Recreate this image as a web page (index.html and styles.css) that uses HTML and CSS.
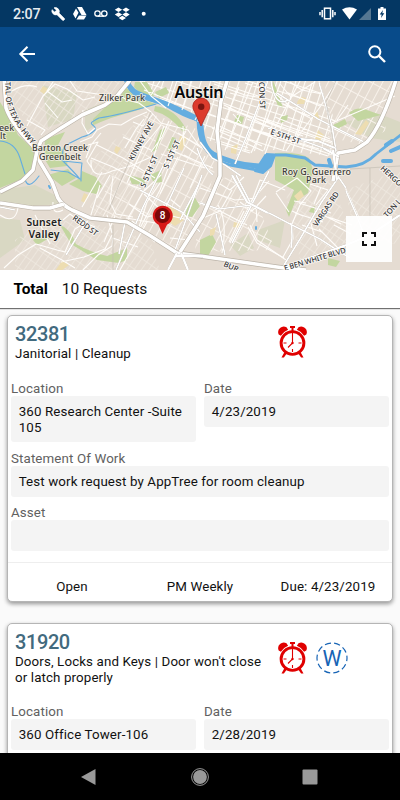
FILE: index.html
```html
<!DOCTYPE html>
<html lang="en">
<head>
<meta charset="utf-8">
<title>Requests</title>
<link rel="stylesheet" href="styles.css">
</head>
<body>
<svg class="defs" width="0" height="0">
  <symbol id="alarm" viewBox="0 0 28 32">
    <g fill="#e00000">
      <path d="M.2 8.500A5.600 5.600 0 0 1 8 1.300L9.600 3.800A15 15 0 0 0 2.400 9.700Z"/>
      <path d="M27.800 8.500A5.600 5.600 0 0 0 20 1.300L18.400 3.800A15 15 0 0 1 25.600 9.700Z"/>
      <path d="M11.500 0h5v2h-1.500v3h-2v-3h-1.500z"/>
      <path d="M6 26l2.300 1.500L5.400 31.500H3zM22 26l-2.300 1.500L22.600 31.500H25z"/>
    </g>
    <circle cx="14" cy="17" r="11.400" fill="#fff" stroke="#e00000" stroke-width="2.900"/>
    <path d="M14 6v11l-4.500 4.500M5 17h3M20 17h3M14 23v3" fill="none" stroke="#e00000" stroke-width="1.100"/>
    <circle cx="14" cy="17" r="1.200" fill="#e00000"/>
  </symbol>
</svg>

<header class="status">
  <span class="clock">2:07</span>
  <svg class="notif" viewBox="50 0 100 27" width="100" height="27" fill="#fff">
    <path d="M64.400 18.500L59 13.100A4 4 0 0 0 54 7.800l2.500 2.400-1.900 1.900L52 9.700A4 4 0 0 0 57 14.700l5.500 5.500q.7.500 1.200 0l.8-.7q.4-.6-.1-1z" stroke="#fff" stroke-width=".7"/>
    <path d="M77 7h5l4.500 8h-5zM76 8.500l2.500 4.300-3 5.700-2.500-4.500zM79 15.500h7.500l-2.500 4h-7.500z"/>
    <g fill="none" stroke="#fff" stroke-width="1.300"><circle cx="97.500" cy="13.500" r="2.700"/><circle cx="104.300" cy="13.500" r="2.700"/><path d="M97.500 16.200h6.800"/></g>
    <path d="M118.500 7.500l3.700 2.300-3.700 2.300-3.700-2.300zM126 7.500l3.700 2.300-3.700 2.300-3.700-2.300zM118.500 12.300l3.700 2.300-3.700 2.300-3.700-2.300zM126 12.300l3.700 2.300-3.700 2.300-3.700-2.300zM122.300 15.700l3.700 2.300-3.700 2.300-3.700-2.300z"/>
    <circle cx="143.700" cy="13.700" r="2"/>
  </svg>
  <svg class="system" viewBox="315 0 75 27" width="75" height="27">
    <g fill="none" stroke="#fff" stroke-width="1.500"><rect x="324.500" y="8.200" width="6" height="10.600"/><path d="M322.200 10v7.200M332.800 10v7.200M320 12v3.200M335 12v3.200"/></g>
    <path d="M342 9.500q7.500-4.500 15 0L349.500 19.500z" fill="#fff"/>
    <path d="M371 8v12h-12z" fill="#557792"/>
    <path d="M378 8.500h2.500V7h3v1.500h2.500V20h-8z" fill="#fff"/>
    <path d="M383 10l-3.300 4.500h2L381 18l3.300-4.700h-2z" fill="#043763"/>
  </svg>
</header>

<nav class="appbar">
  <svg width="18" height="18" viewBox="0 0 18 18" fill="none" stroke="#fff" stroke-width="2"><path d="M17 9H2.500M9.500 1.800L2.300 9l7.200 7.200"/></svg>
  <svg width="18" height="18" viewBox="0 0 18 18" fill="none" stroke="#fff" stroke-width="2"><circle cx="6.800" cy="6.800" r="5.600"/><path d="M11 11l6 6" stroke-width="2.400"/></svg>
</nav>

<section class="map">
<svg viewBox="0 81 400 189" width="400" height="189">
  <defs>
    <pattern id="gridA" width="9" height="11" patternUnits="userSpaceOnUse" patternTransform="rotate(18)"><path d="M0 .5H9M.5 0V11" stroke="#fffdf8" stroke-width="1.200" fill="none"/></pattern>
    <pattern id="gridB" width="8" height="17" patternUnits="userSpaceOnUse" patternTransform="rotate(28)"><path d="M0 .5H8M.5 0V17" stroke="#f8f2eb" stroke-width="1" fill="none"/></pattern>
    <pattern id="gridC" width="6" height="13" patternUnits="userSpaceOnUse" patternTransform="rotate(35)"><path d="M0 .5H6M.5 0V13" stroke="#efe8df" stroke-width=".8" fill="none"/></pattern>
  </defs>
  <rect y="81" width="400" height="189" fill="#e5dcd2"/>

  <g fill="#d9d8c3">
    <path d="M0 190L35 185 55 195 62 204 30 206 0 202zM0 218L20 220 25 240 0 258z"/>
    <path d="M258 230L285 220 280 248 258 240zM230 245l18-12 6 15-14 8zM345 122l35-8 20 8v20l-30-4z"/>
    <path d="M85 110l25-10 5 12-30 20zM42 85l35 8-4 26-25 8z"/>
  </g>
  <g fill="url(#gridC)">
    <path d="M14 81H122L105 100 60 125 35 135 12 100zM45 220L90 222 150 240 160 270H15V240zM90 160L140 120 150 130 125 220 90 212z"/>
    <path d="M285 190L330 180 355 240 300 260zM345 190l55-20v75l-45-10z"/>
  </g>
  <g fill="url(#gridB)">
    <path d="M145 112L195 128 218 160 200 220 178 250 130 220 90 215 125 160zM200 190L230 175 262 215 275 250 195 252z"/>
    <path d="M325 81h68l-8 50-22 14-35-8z"/>
  </g>
  <path fill="url(#gridA)" d="M138 81H318L335 120 332 156 275 150 235 152 208 140 200 116 162 100z"/>

  <g fill="#c3d6a0">
    <path d="M0 102Q11 118 18 135L36 152 31 170 22 179 0 188z"/>
    <path d="M124 85L135 97 156 104 135 111 111 118 93 125 93 119 112 101z"/>
    <path d="M45 139L65 132 58 145 68 157 67 166 50 168 44 158zM135 82h12l8 13-9 4-12-12z"/>
    <path d="M155 106q20 2 31 23l-3 3q-13-17-29-21z"/>
    <path d="M80 178l2-7 14 6 6 9-6 8-13-3-14-7zM48 175l20-6 8 9-14 8zM128 175l16 4 2 6-14-1z"/>
    <path d="M160 130l5-2-8 22-5 2zM172 137l4 1-4 12-5 1z"/>
    <path d="M275 153Q300 152 309 158L313 170 308 193 295 202 289 217 286 210 294 190 275 180z"/>
    <path d="M333 125l12-6 2 5-10 5zM349 113q8-7 18-3l14 5-23 6zM200 240l12-6 4 8-8 14h-8z"/>
    <path d="M60 225Q70 228 76 244Q90 252 107 256l20-8v12l-8 3-22-3-26-16zM33 240q17-10 22-5l-18 10zM273 81q5 11 10 27l-5-2-6-16z"/>
    <path d="M237 115l7 2-2 7-8-2zM280 117l8-2-1 5-6 3zM188 205l6-9 6 10-8 11-7-1zM150 175l11-5 1 12-8 1z"/>
    <path d="M155 92l11-5 3 6-10 5zM311 208l4-2-1 7-5-1zM328 258l12 3-4 6-8-2z"/>
  </g>
  <g fill="#edddb1">
    <path d="M43 86l5 3-4 5-4-3zM302 97q-5 3-5 7h7l2-6zM317 111l-4 7 7 2zM366 120l3 3-8 12-6-1zM318 130l6 5-5 7-4-3zM180 136l7 1-5 14-5-3z"/>
    <path d="M84 193l4 2-3 8-4-2zM116 146l5 2-4 6-3-3zM167 203q13 6 17 17l-9 6-11-7zM301 190l3 6-6 5-4-5zM62 261l7 4-8 6h-6zM234 222l8 2-3 4-6-1zM210 230l6-3-2 8-4 1zM231 147l7-3-2 10-5-1z"/>
  </g>

  <g fill="none" stroke="#64ade0" stroke-linecap="round" stroke-linejoin="round">
    <path d="M125 78Q128 91 139 97L164 104Q185 117 198 120Q198 136 204 147Q213 161 230 165L257 170Q264 170 268 155L286 155 305 158 315 165 346 167Q365 166 376 154L402 134" stroke-width="2.800"/>
    <path d="M127 81Q130 92 144 96L166 104Q187 113 201 121" stroke-width="5.200"/>
    <path d="M201 126Q202 147 213 154Q234 165 259 166" stroke-width="5.200"/>
    <path d="M255 171L266 154 275 155 271 166 263 173z" fill="#64ade0" stroke-width="2"/>
    <path d="M386 145l6-4M391 151l9-4M383 161l8 0M329 160l2 6" stroke-width="4"/>
    <path d="M156 104Q120 115 99 118C83 126 97 123 95 130Q90 135 82 137L66 145Q61 150 63 161M63 161L82 163Q81 169 81 181M61 159Q75 173 80 179L68 172 51 170 M0 141Q15 142 20 158L25 174M25 179q3 12 14-3" stroke-width="1.100"/>
    <path d="M49 186l1 2M256 227v2" stroke-width="2"/>
  </g>

  <g class="minor">
    <path d="M12 91Q25 83 37 87M27 126L43 96 55 84 67 89 83 100 95 97M27 120L45 130 41 135M83 110L82 123 88 134 95 128M53 82L47 91 62 102 72 100M58 118L45 103M70 81L77 91 104 95"/>
    <path d="M117 94L127 100 139 103 151 112 161 123 188 130 200 147M80 142L92 137 97 130 109 124 121 125 133 118 147 112M86 158L91 145 101 133M133 122L143 126 153 114M125 148L136 129 144 119M161 125L143 147 127 183M151 152L162 137 169 121M183 126L184 145 198 155M91 160Q90 181 112 171L131 166 151 157M97 145L123 158 155 178M88 145L98 142 87 161 93 170M91 158L113 167 143 183M123 137L136 143 151 150M186 131L175 150 160 190 139 230M164 126L153 158 145 182M161 154L205 168M168 149L213 168M178 133L202 148M178 157L160 194M205 156L190 188M184 155L206 166"/>
    <path d="M53 202Q52 216 63 210M82 207L102 172M97 198L110 175M90 218L100 185M113 176L110 202 116 214 133 217M115 216L104 242M107 215L112 233M129 204L147 217 160 214M128 218L143 192 161 175M141 189L128 184M138 230L147 202 160 183M0 215Q15 225 18 208M63 220L70 214 78 220 95 227M40 248L62 260 75 268M36 244L18 255 4 268M36 244L57 250 65 252 75 229 88 221M61 262L84 257 105 249 112 235M120 270L147 222M83 270L98 255 112 246 113 238 138 247M50 244L35 215M144 194L161 210 170 199 180 207M126 218L162 224 168 215 188 220M132 221L155 242M170 238L190 240M200 188L235 200 256 198M215 181L230 190 244 177M200 202L220 211 247 225M203 218L220 211 232 190M251 203L230 243M265 180L250 208M240 202L252 211 266 196M250 206L260 180 285 190M250 225L257 240 286 260M256 205L257 222"/>
    <path d="M140 81L151 96 166 108M160 81L151 95M144 90L191 109M177 81L168 106M191 81L182 110M200 94L198 122M205 101L195 120M210 98L260 117 333 142M204 112L287 143 328 156M212 128L263 151M215 142L250 153M230 93L286 108M224 105L261 123 306 143M239 87L220 132M253 82L235 127 225 150M267 81L247 140 237 156M281 81L267 120 251 153M300 81L275 128 265 154M312 83L295 137 286 151M315 82L291 97 280 84M245 83L276 94 294 110 310 116M228 108L303 136M226 119L271 136M219 126L262 146M215 134L248 148M220 137L217 144M286 92L320 106M283 104L312 119M275 117L330 139M263 132L319 149M266 120L281 127M247 119L288 134M233 114L241 123M319 81L326 106 333 142M337 81L320 107 296 139M327 125L395 96M328 126L364 143M337 120L348 105M290 82L302 90 322 94M214 84L245 95 263 98M203 90L216 97"/>
    <path d="M218 205Q228 222 222 253M229 242L244 211M245 208L269 181M248 227L257 243 284 258M276 193L289 212M276 192L297 178 311 191 300 205 292 224 293 239 283 257M310 184L328 190 316 205M314 204L321 187M294 201L306 203M292 211L303 216M299 203L331 213M295 213L323 222M323 215L341 224M328 217L352 225M334 225L351 234M310 220L317 246M319 229L338 248M302 225L322 232M344 185L360 220"/>
  </g>
  <g class="street">
    <path d="M268 81L245 140 235 164M271 81Q275 108 288 100M319 83L332 126 336 151 335 176M277 93L318 119 364 142M268 128L337 153"/>
    <path d="M0 207L15 210M200 203L219 209 252 205 273 215 292 225 320 239 340 252 350 258M338 178L321 203 300 239 284 265M346 191L356 214 363 232M337 175L346 188M291 248Q293 237 291 223M236 175L251 204M199 184L180 220M216 214Q221 235 225 255M269 171L232 243M200 142L212 158 225 165 241 176"/>
    <path d="M140 190L182 212 200 232M166 160L143 207 116 270M184 168L159 222M202 175L174 253M86 222L66 255M125 222L119 254M197 148Q203 167 213 175"/>
  </g>
  <path class="rail" d="M336 81L326 102 335 153M151 112L121 180 109 210M370 168v55M350 169L400 166M113 225v45"/>

  <g class="casing">
    <path d="M4 78L6 108Q12 125 33 146L40 162 52 182 58 198Q62 205 72 210L90 218 127 222 149 235 177 253 200 256 284 268 306 270"/>
  </g>
  <g class="road">
    <path d="M4 78L6 108Q12 125 33 146L40 162 52 182 58 198Q62 205 72 210L90 218 127 222 149 235 177 253 200 256 284 268 306 270"/>
  </g>
  <g class="casing wide">
    <path d="M0 192L22 181 33 170 37 151 41 141 61 128 82 115 105 105 117 96 131 79M0 203L33 208 50 208 64 204M228 78L221 101 217 131 220 160 220 176 203 216 180 252M396 80Q382 125 367 142L355 150 338 153 333 181"/>
  </g>
  <g class="road wide">
    <path d="M0 192L22 181 33 170 37 151 41 141 61 128 82 115 105 105 117 96 131 79M0 203L33 208 50 208 64 204M228 78L221 101 217 131 220 160 220 176 203 216 180 252M396 80Q382 125 367 142L355 150 338 153 333 181"/>
  </g>
  <g class="street bold">
    <path d="M177 253L168 270M181 253L188 270M232 175L247 202 268 213M284 267L344 246 370 235 400 215M335 148L318 141 300 139M175 256H203M323 148L339 157M333 150L337 180"/>
  </g>

  <g class="label">
    <text x="99" y="101" textLength="46">Zilker Park</text>
    <text x="32" y="151" textLength="56">Barton Creek</text><text x="39" y="159.500" textLength="42">Greenbelt</text>
    <text x="-1" y="130.500">eek</text><text x="0" y="139">lt</text>
    <text x="282" y="174.500" textLength="69">Roy G. Guerrero</text><text x="306" y="183" textLength="20">Park</text>
  </g>
  <g class="label town">
    <text x="26.500" y="226" textLength="35">Sunset</text><text x="28.500" y="237.500" textLength="31">Valley</text>
  </g>
  <text class="label city" x="174.500" y="98" textLength="49">Austin</text>
  <g class="label roadname">
    <path id="capital" d="M5 81L6 100Q10 121 34 147" fill="none" stroke="none"/>
    <text><textPath href="#capital" startOffset="1" textLength="70">TAL OF TEXAS HWY</textPath></text>
    <text transform="translate(133 161) rotate(-61)" textLength="43">KINNEY AVE</text>
    <text transform="translate(145 188) rotate(-68)" textLength="34">S 5TH ST</text>
    <text transform="translate(168 169) rotate(-66)" textLength="30">S 1ST ST</text>
    <text transform="translate(259 82) rotate(88)">CON ST</text>
    <text transform="translate(270 134) rotate(19)" textLength="31">E 5TH ST</text>
    <text transform="translate(72 219) rotate(36)" textLength="29">REDD ST</text>
    <text transform="translate(317 227) rotate(-56)" textLength="40">VARGAS RD</text>
    <text transform="translate(285 271) rotate(-17)" textLength="64">E BEN WHITE BLVD</text>
    <text transform="translate(223 266) rotate(24)">BUR</text>
    <text transform="translate(380 169) rotate(43)">HERGO</text>
    <text transform="translate(387 218) rotate(-48)">TON L</text>
  </g>

  <path d="M201 126l-6.500-14.300a8.500 8.500 0 1 1 13.500 0z" fill="#dc3b2c" stroke="#a92720" stroke-width=".8"/>
  <circle cx="201.200" cy="106.800" r="3.200" fill="#7b1510"/>
  <path d="M162.500 234l-4-9.300a10 10 0 1 1 8.500 0z" fill="#d71918"/>
  <circle cx="162.500" cy="215.500" r="7.600" fill="#7b0808"/>
  <text class="count" x="162.500" y="219.200">8</text>
</svg>
<button class="expand" aria-label="Full screen"><svg width="14" height="14" viewBox="0 0 14 14" fill="none" stroke="#111" stroke-width="2"><path d="M1 5V1h4M9 1h4v4M13 9v4H9M5 13H1V9"/></svg></button>
</section>

<div class="total"><b>Total</b><span>10 Requests</span></div>

<main class="list">
  <article class="card">
    <div class="head">
      <div class="title"><h2>32381</h2><p>Janitorial | Cleanup</p></div>
      <svg class="alarm"><use href="#alarm"/></svg>
    </div>
    <div class="pair">
      <div class="field"><label>Location</label><div class="value">360 Research Center -Suite 105</div></div>
      <div class="field"><label>Date</label><div class="value">4/23/2019</div></div>
    </div>
    <div class="field full"><label>Statement Of Work</label><div class="value">Test work request by AppTree for room cleanup</div></div>
    <div class="field full"><label>Asset</label><div class="value"></div></div>
    <div class="foot"><span>Open</span><span>PM Weekly</span><span>Due: 4/23/2019</span></div>
  </article>
  <article class="card">
    <div class="head">
      <div class="title"><h2>31920</h2><p>Doors, Locks and Keys | Door won't close or latch properly</p></div>
      <svg class="alarm"><use href="#alarm"/></svg>
      <svg class="badge" width="32" height="32" viewBox="0 0 32 32"><circle cx="16" cy="16" r="15" fill="none" stroke="#1764b5" stroke-width="1.200" stroke-dasharray="6.200 3.225" stroke-dashoffset="3"/><text x="16" y="23.500">W</text></svg>
    </div>
    <div class="pair">
      <div class="field"><label>Location</label><div class="value">360 Office Tower-106</div></div>
      <div class="field"><label>Date</label><div class="value">2/28/2019</div></div>
    </div>
  </article>
</main>

<footer class="navbar">
  <svg width="16" height="16" viewBox="0 0 16 16"><path d="M0 8L14.500 0v16z" fill="#999"/></svg>
  <svg width="18" height="18" viewBox="0 0 18 18"><circle cx="9" cy="9" r="8.400" fill="none" stroke="#999"/><circle cx="9" cy="9" r="6.900" fill="#999"/></svg>
  <svg width="16" height="16" viewBox="0 0 16 16"><rect x=".5" y=".5" width="15" height="15" rx="1" fill="#999"/></svg>
</footer>
</body>
</html>
```
FILE: styles.css
```css
* { box-sizing: border-box; }
body {
  margin: 0;
  width: 400px;
  height: 800px;
  overflow: hidden;
  display: flex;
  flex-direction: column;
  background: #fafafa;
  font: 13.33px/15.6px Roboto, sans-serif;
  letter-spacing: .12px;
  color: #111;
}
svg { display: block; flex: none; }
.defs { position: absolute; }

.status { flex: none; height: 27px; background: #043763; display: flex; align-items: center; padding: 0 10px 0 13px; color: #fff; }
.clock { width: 37px; font-size: 14.3px; font-weight: 500; letter-spacing: -.2px; color: #e6ebf0; padding-top: 2px; }
.system { margin-left: auto; }

.appbar { flex: none; height: 54px; background: #084b8a; display: flex; align-items: center; justify-content: space-between; padding: 0 14px 0 18px; }

.map { flex: none; height: 189px; position: relative; overflow: hidden; }
.expand { position: absolute; right: 8px; bottom: 8px; width: 46px; height: 46px; padding: 0; border: 0; background: rgba(255, 255, 255, .93); display: flex; align-items: center; justify-content: center; }
.minor { fill: none; stroke: #fffdfa; stroke-width: 1.1; stroke-linejoin: round; }
.street { fill: none; stroke: #fff; stroke-width: 1.7; stroke-linejoin: round; filter: drop-shadow(0 0 .5px #9c958b); }
.street.bold { stroke-width: 2.4; }
.rail { fill: none; stroke: #c4beb5; stroke-width: .7; }
.casing { fill: none; stroke: #bbb3a8; stroke-width: 4.8; stroke-linejoin: round; }
.road { fill: none; stroke: #fff; stroke-width: 3.6; stroke-linejoin: round; }
.label { font: 500 8.9px "Noto Sans", sans-serif; letter-spacing: 0; fill: #3d3d38; stroke: #f6f1e9; stroke-opacity: .75; stroke-width: 1.8px; paint-order: stroke; stroke-linejoin: round; }
.town { font-size: 10.4px; font-weight: 600; fill: #222; }
.city { font-size: 16px; font-weight: 600; fill: #080808; }
.roadname { font-size: 7.6px; fill: #333; stroke: #fff; }
.count { font: 500 10px Roboto, sans-serif; fill: #fff; stroke: none; text-anchor: middle; letter-spacing: 0; }

.total { flex: none; height: 38px; background: #fff; display: flex; align-items: center; gap: 14px; padding-left: 13.5px; font-size: 15.5px; letter-spacing: 0; box-shadow: 0 1px 1px rgba(0, 0, 0, .55); z-index: 1; padding-top: 2px; }
.total b { font-weight: 700; letter-spacing: -.1px; color: #000; }

.list { flex: 1; min-height: 0; overflow: hidden; padding: 7px 7px 0 7px; }
.card { height: 287px; margin-bottom: 21px; display: flex; flex-direction: column; background: #fff; border: 1px solid #b5b5b5; border-radius: 5px; box-shadow: 0 2px 4px rgba(0, 0, 0, .4); }
.head { flex: none; display: flex; padding: 7px 0 0 7px; height: 63px; }
.card:nth-child(2) .head { height: 78px; }
.title { width: 256px; margin-right: 7px; }
h2 { margin: 0; font-size: 20px; line-height: 23px; font-weight: 500; letter-spacing: -.4px; color: #426a7e; }
p { margin: 0; }
.alarm { width: 29px; height: 32px; margin-top: 3px; }
.card:nth-child(2) .alarm, .badge { margin-top: 11px; }
.badge { margin-left: 9px; }
.badge text { font: 400 21.5px Roboto, sans-serif; letter-spacing: 0; fill: #1764b5; text-anchor: middle; }
.pair { display: grid; grid-template-columns: 185px 185px; gap: 8px; padding-left: 3px; align-items: start; }
.field label { display: block; height: 16.5px; color: #616161; line-height: 20px; }
.value { min-height: 31px; background: #f4f4f4; border-radius: 3px; padding: 8.7px 7.7px 6.7px; }
.full { margin: 7px 3px 0; }
.full + .full { margin-top: 6.5px; }
.foot { margin-top: auto; height: 39px; flex: none; border-top: 1px solid #eee; display: grid; grid-template-columns: repeat(3, 1fr); text-align: center; align-items: center; padding-top: 9px; }
.navbar { flex: none; height: 47px; background: #000; display: flex; align-items: center; justify-content: space-between; padding: 0 82px 0 81px; z-index: 1; }
```
